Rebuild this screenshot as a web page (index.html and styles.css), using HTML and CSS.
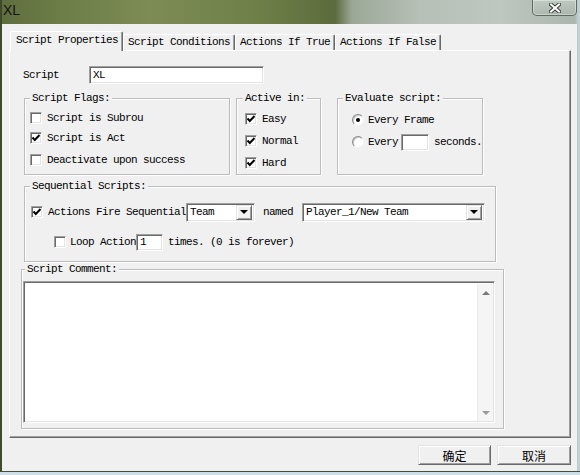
FILE: index.html
```html
<!DOCTYPE html>
<html>
<head>
<meta charset="utf-8">
<title>XL</title>
<link rel="stylesheet" href="styles.css">
</head>
<body>
<div class="titlebar">
  <span class="title">XL</span>
  <div class="close">
    <svg width="12" height="10" viewBox="0 0 12 10"><path d="M2 1.5 L10 8.5 M10 1.5 L2 8.5" stroke="#3a3f3a" stroke-width="4" stroke-linecap="square" fill="none"/><path d="M2 1.5 L10 8.5 M10 1.5 L2 8.5" stroke="#ffffff" stroke-width="2" stroke-linecap="square" fill="none"/></svg>
  </div>
</div>
<div class="client">
  <div class="tabs">
    <div class="tab active">Script Properties</div>
    <div class="tab">Script Conditions</div>
    <div class="tab">Actions If True</div>
    <div class="tab">Actions If False</div>
  </div>
  <div class="pane">
    <div class="script-row">
      <span class="script-lbl">Script</span>
      <div class="field script-input">XL</div>
    </div>

    <div class="groups">
      <div class="group flags">
        <span class="legend">Script Flags:</span>
        <div class="row r20"><span class="cb"></span><span class="txt">Script is Subrou</span></div>
        <div class="row r20"><span class="cb"><svg viewBox="0 0 10 10"><polyline points="1.5,4.5 3.8,7 8.5,2" fill="none" stroke="#000" stroke-width="2"/></svg></span><span class="txt">Script is Act</span></div>
        <div class="row r24"><span class="cb"></span><span class="txt">Deactivate upon success</span></div>
      </div>

      <div class="group active-in">
        <span class="legend">Active in:</span>
        <div class="row r22"><span class="cb"><svg viewBox="0 0 10 10"><polyline points="1.5,4.5 3.8,7 8.5,2" fill="none" stroke="#000" stroke-width="2"/></svg></span><span class="txt">Easy</span></div>
        <div class="row r22"><span class="cb"><svg viewBox="0 0 10 10"><polyline points="1.5,4.5 3.8,7 8.5,2" fill="none" stroke="#000" stroke-width="2"/></svg></span><span class="txt">Normal</span></div>
        <div class="row r22"><span class="cb"><svg viewBox="0 0 10 10"><polyline points="1.5,4.5 3.8,7 8.5,2" fill="none" stroke="#000" stroke-width="2"/></svg></span><span class="txt">Hard</span></div>
      </div>

      <div class="group evaluate">
        <span class="legend">Evaluate script:</span>
        <div class="row r22"><span class="rb on"></span><span class="txt rtxt">Every Frame</span></div>
        <div class="row r22"><span class="rb"></span><span class="txt rtxt">Every</span><div class="field secs"></div><span class="txt secs-lbl">seconds.</span></div>
      </div>
    </div>

    <div class="group seq">
      <span class="legend">Sequential Scripts:</span>
      <div class="row seq-row1">
        <span class="cb"><svg viewBox="0 0 10 10"><polyline points="1.5,4.5 3.8,7 8.5,2" fill="none" stroke="#000" stroke-width="2"/></svg></span>
        <span class="txt fire">Actions Fire Sequential</span>
        <div class="field select team"><span class="sel-text">Team</span><span class="drop"><span class="tri"></span></span></div>
        <span class="txt named">named</span>
        <div class="field select player"><span class="sel-text">Player_1/New Team</span><span class="drop"><span class="tri"></span></span></div>
      </div>
      <div class="row seq-row2">
        <span class="cb"></span>
        <span class="txt loop">Loop Action</span>
        <div class="field loop-input">1</div>
        <span class="txt times">times. (0 is forever)</span>
      </div>
    </div>

    <div class="group comment">
      <span class="legend">Script Comment:</span>
      <div class="field textarea">
        <div class="sb"><span class="tri up"></span><span class="tri down"></span></div>
      </div>
    </div>
  </div>
  <div class="buttons">
    <div class="btn">确定</div>
    <div class="btn">取消</div>
  </div>
</div>
</body>
</html>
```

FILE: styles.css
```css
* { box-sizing: border-box; }
html, body { margin: 0; padding: 0; }
body {
  width: 580px;
  height: 475px;
  overflow: hidden;
  background:
    linear-gradient(to bottom, rgba(0,0,0,0) 471px, #44502f 471px, #44502f 472px, #cfdfe8 472px),
    linear-gradient(90deg, #3e4a2b 0, #3e4a2b 2px, #5f6e3e 2px, #6d7d47 60px, #7d8c55 150px, #6f7f48 260px, #5c6b3d 335px, #9ba897 352px, #b6c0b6 420px, #bec7c0 500px, #aab6ad 575px, #c2d0d4 578px);
  font-family: "Liberation Mono", "DejaVu Sans Mono", monospace;
  font-size: 11px;
  letter-spacing: -0.6px;
  color: #000;
}

/* title bar */
.titlebar {
  height: 24px;
  display: flex;
  justify-content: space-between;
  align-items: flex-start;
}
.title {
  font-family: "Liberation Sans", Arial, sans-serif;
  font-size: 14px;
  letter-spacing: 0;
  line-height: 16px;
  padding: 2px 0 0 3px;
  color: #141414;
}
.close {
  width: 45px;
  height: 16px;
  margin-right: 3px;
  border: 1px solid rgba(55, 65, 55, 0.7);
  border-top: 0;
  border-radius: 0 0 5px 5px;
  box-shadow: inset 0 0 0 1px rgba(255, 255, 255, 0.35);
  background: linear-gradient(rgba(205, 214, 205, 0.55), rgba(170, 180, 170, 0.6));
  display: flex;
  align-items: center;
  justify-content: center;
}

/* client */
.client {
  margin-left: 2px;
  width: 575px;
  height: 447px;
  background: #f0f0f0;
  padding-top: 7px;
}

/* tabs */
.tabs {
  display: flex;
  align-items: flex-end;
  height: 19px;
  padding-left: 10px;
}
.tab {
  height: 16px;
  padding: 0 4px;
  line-height: 15px;
  background: #f0f0f0;
  border: 1px solid;
  border-color: #ffffff #696969 transparent #ffffff;
  border-bottom: 0;
  box-shadow: inset -1px 0 0 #a0a0a0;
  border-radius: 2px 2px 0 0;
  white-space: nowrap;
}
.tab.active {
  height: 20px;
  margin: 0 0 -1px -2px;
  padding: 0 4px 0 5px;
  line-height: 16px;
  position: relative;
  z-index: 1;
}

/* pane */
.pane {
  margin-left: 7px;
  width: 562px;
  height: 388px;
  border: 1px solid;
  border-color: #ffffff #696969 #696969 #ffffff;
  box-shadow: inset -1px -1px 0 #a0a0a0;
  padding: 15px 0 0 13px;
}

.field {
  background: #ffffff;
  border: 1px solid;
  border-color: #a0a0a0 #ffffff #ffffff #a0a0a0;
  box-shadow: inset 1px 1px 0 #696969, inset -1px -1px 0 #e3e3e3;
}

.script-row {
  display: flex;
  align-items: center;
  height: 18px;
}
.script-lbl { width: 66px; }
.script-input {
  width: 175px;
  height: 18px;
  line-height: 16px;
  padding-left: 3px;
}

.groups {
  display: flex;
  margin-top: 14px;
  margin-left: 1px;
}
.group {
  position: relative;
  border: 1px solid #bcbcbc;
  box-shadow: inset 1px 1px 0 #ffffff, 1px 1px 0 #ffffff;
}
.legend {
  position: absolute;
  top: -7px;
  left: 5px;
  padding: 0 2px;
  background: #f0f0f0;
  line-height: 12px;
  white-space: nowrap;
}

.row {
  display: flex;
  align-items: center;
  white-space: nowrap;
}
.r20 { height: 20px; }
.r22 { height: 22px; }
.r24 { height: 24px; }
.txt { margin-left: 5px; line-height: 12px; }

.cb {
  flex: none;
  width: 12px;
  height: 12px;
  background: #ffffff;
  border: 1px solid;
  border-color: #a0a0a0 #ffffff #ffffff #a0a0a0;
  box-shadow: inset 1px 1px 0 #696969, inset -1px -1px 0 #e3e3e3;
  display: flex;
  align-items: center;
  justify-content: center;
}
.cb svg { width: 10px; height: 10px; display: block; }

.rb {
  flex: none;
  position: relative;
  width: 12px;
  height: 12px;
  border-radius: 50%;
  background: #ffffff;
  border: 1px solid;
  border-color: #8a8a8a #f4f4f4 #f4f4f4 #8a8a8a;
  box-shadow: inset 1px 1px 0 #c8c8c8;
}
.rb.on::after {
  content: "";
  position: absolute;
  left: 3px;
  top: 3px;
  width: 4px;
  height: 4px;
  border-radius: 50%;
  background: #000;
}
.rtxt { margin-left: 4px; }

.flags {
  width: 206px;
  height: 77px;
  padding: 9px 0 0 5px;
}

.active-in {
  width: 85px;
  height: 77px;
  margin-left: 6px;
  padding: 9px 0 0 8px;
}
.active-in .legend { left: 6px; }

.evaluate {
  width: 146px;
  height: 77px;
  margin-left: 16px;
  padding: 10px 0 0 14px;
}
.secs {
  width: 28px;
  height: 17px;
  margin-left: 3px;
}
.secs-lbl { margin-left: 5px; }

/* sequential */
.seq {
  margin-top: 11px;
  margin-left: 1px;
  width: 472px;
  height: 76px;
  padding: 14px 0 0 6px;
}
.seq-row1 { height: 22px; }
.fire { margin-right: 0; }
.select {
  position: relative;
  height: 19px;
  display: flex;
  align-items: center;
  justify-content: space-between;
  padding: 2px 2px 2px 3px;
}
.team { width: 69px; }
.player { width: 183px; margin-left: 9px; }
.named { margin-left: 8px; }
.sel-text { line-height: 12px; }
.drop {
  width: 16px;
  height: 15px;
  background: #f0f0f0;
  border: 1px solid;
  border-color: #e3e3e3 #696969 #696969 #e3e3e3;
  box-shadow: inset 1px 1px 0 #ffffff, inset -1px -1px 0 #a0a0a0;
  display: flex;
  align-items: center;
  justify-content: center;
}
.tri {
  width: 0;
  height: 0;
  border-left: 4px solid transparent;
  border-right: 4px solid transparent;
  border-top: 4px solid #000;
}
.seq-row2 {
  height: 22px;
  margin-top: 8px;
  padding-left: 23px;
}
.loop { margin-left: 4px; }
.loop-input {
  width: 27px;
  height: 17px;
  line-height: 15px;
  padding-left: 3px;
}
.times { margin-left: 5px; }

/* comment */
.comment {
  margin-top: 7px;
  margin-left: -2px;
  width: 483px;
  height: 160px;
  padding: 11px 0 0 1px;
}
.comment .legend { left: 3px; }
.textarea {
  width: 472px;
  height: 142px;
  display: flex;
  justify-content: flex-end;
  padding: 2px 1px 1px 2px;
}
.sb {
  width: 16px;
  height: 100%;
  background: #f5f5f5;
  border-left: 1px solid #ebebeb;
  display: flex;
  flex-direction: column;
  align-items: center;
  justify-content: space-between;
  padding: 7px 0 6px;
}
.tri.up {
  border-top: 0;
  border-bottom: 4px solid #7a7a7a;
  border-left-width: 4px;
  border-right-width: 4px;
}
.tri.down { border-top-color: #9a9a9a; }

/* buttons */
.buttons {
  display: flex;
  justify-content: flex-end;
  gap: 6px;
  padding: 7px 6px 0 0;
}
.btn {
  width: 74px;
  height: 20px;
  border: 1px solid;
  border-color: #e3e3e3 #696969 #696969 #e3e3e3;
  box-shadow: inset 1px 1px 0 #ffffff, inset -1px -1px 0 #a0a0a0;
  background: #f0f0f0;
  font-family: "Noto Sans CJK SC", sans-serif;
  font-size: 12px;
  letter-spacing: 0;
  display: flex;
  align-items: center;
  justify-content: center;
}
.btn:first-child { width: 73px; }
```
